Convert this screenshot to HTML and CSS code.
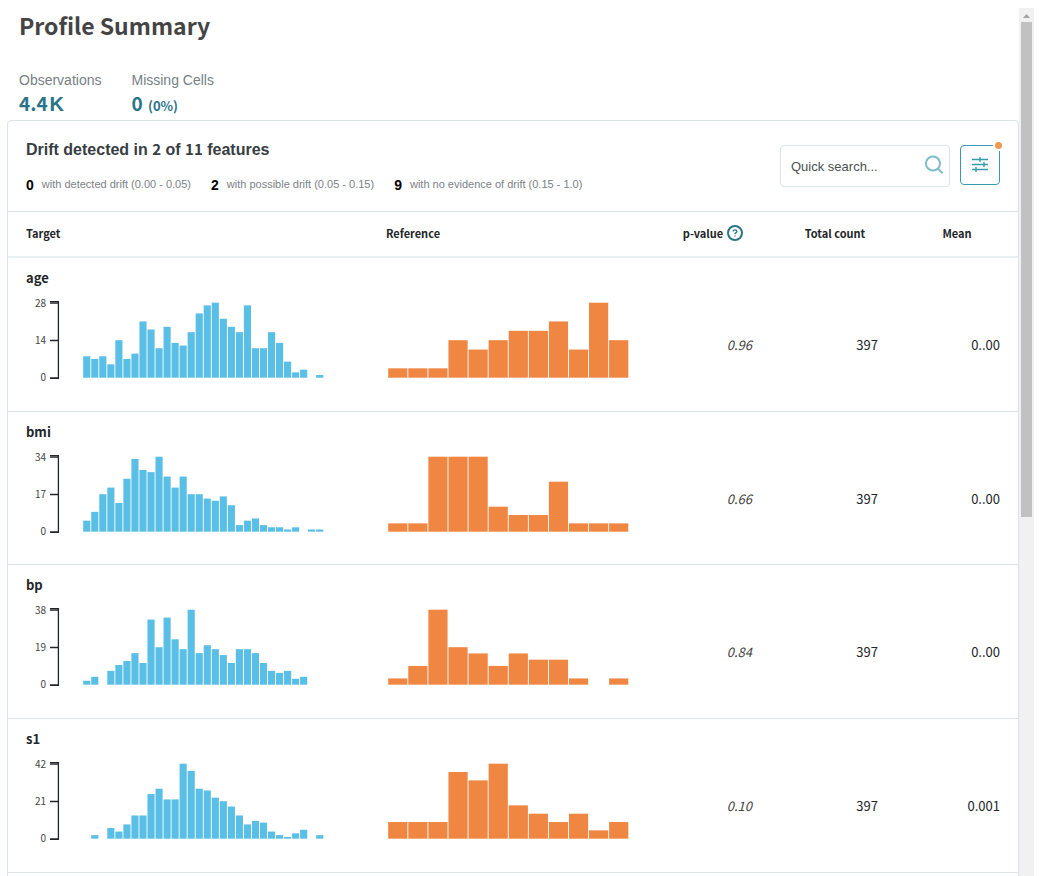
FILE: index.html
```html
<!DOCTYPE html>
<html lang="en">
<head>
<meta charset="utf-8">
<title>Profile Summary</title>
<link rel="stylesheet" href="styles.css">
</head>
<body>
<div class="viewport">
  <main class="content">
    <h1 class="title">Profile Summary</h1>
    <dl class="stats">
      <div class="stat"><dt>Observations</dt><dd>4.4<span class="unit">K</span></dd></div>
      <div class="stat"><dt>Missing Cells</dt><dd>0 <span class="percent">(0%)</span></dd></div>
    </dl>
    <section class="panel">
      <header class="panel-head">
        <div class="drift">
          <h2 class="drift-title">Drift detected in <span class="num">2</span> of <span class="num">11</span> features</h2>
          <ul class="legend">
            <li><strong>0</strong>with detected drift (0.00 - 0.05)</li>
            <li><strong>2</strong>with possible drift (0.05 - 0.15)</li>
            <li><strong>9</strong>with no evidence of drift (0.15 - 1.0)</li>
          </ul>
        </div>
        <div class="tools">
          <label class="search">
            <input type="text" placeholder="Quick search..." aria-label="Quick search">
            <svg class="search-icon" viewBox="0 0 20 20" aria-hidden="true"><circle cx="9" cy="8.5" r="7"/><path d="M13.8 13.4 18.6 18.2"/></svg>
          </label>
          <button class="filter" type="button" aria-label="Filter">
            <svg class="filter-icon" viewBox="0 0 16 16" aria-hidden="true"><path d="M0 3.5H16M0 8.5H16M0 13.5H16M8 1V6M12 6V11M4 11V16"/></svg>
            <span class="dot"></span>
          </button>
        </div>
      </header>
      <table class="features">
        <colgroup><col class="col-target"><col><col class="col-num"><col class="col-num"><col class="col-num"></colgroup>
        <thead>
          <tr>
            <th class="left">Target</th><th class="left">Reference</th>
            <th><span class="help-label">p-value <svg class="help" viewBox="0 0 16 16" aria-hidden="true"><circle cx="8" cy="8" r="7"/><path d="M6.2 6.5C6.2 5.4 7 4.8 8 4.8S9.9 5.4 9.9 6.4C9.9 7.7 8 7.6 8 9.3M8 10.4V11.6"/></svg></span></th>
            <th>Total count</th><th>Mean</th>
          </tr>
        </thead>
        <tbody>
          <tr>
            <td><div class="name">age</div><svg class="chart" role="img" aria-label="age target" data-kind="target" data-values="8,7,8,5,14,7,9,21,18,11,19,13,12,17,24,27,28,22,19,17,27,11,11,17,13,6,2,3,0,1"></svg></td>
            <td class="ref"><svg class="chart" role="img" aria-label="age reference" data-kind="reference" data-values="1,1,1,4,3,4,5,5,6,3,8,4"></svg></td>
            <td class="value p">0.96</td><td class="value">397</td><td class="value">0..00</td>
          </tr>
          <tr>
            <td><div class="name">bmi</div><svg class="chart" role="img" aria-label="bmi target" data-kind="target" data-values="5,9,17,20,13,24,33,28,27,34,25,20,25,17,17,15,14,16,12,3,5,6,3,2,2,1,2,0,1,1"></svg></td>
            <td class="ref"><svg class="chart" role="img" aria-label="bmi reference" data-kind="reference" data-values="1,1,9,9,9,3,2,2,6,1,1,1"></svg></td>
            <td class="value p">0.66</td><td class="value">397</td><td class="value">0..00</td>
          </tr>
          <tr>
            <td><div class="name">bp</div><svg class="chart" role="img" aria-label="bp target" data-kind="target" data-values="2,4,0,7,10,12,16,11,33,19,34,23,18,38,16,20,18,15,11,18,18,16,11,7,6,7,3,4,0,0"></svg></td>
            <td class="ref"><svg class="chart" role="img" aria-label="bp reference" data-kind="reference" data-values="1,3,12,6,5,3,5,4,4,1,0,1"></svg></td>
            <td class="value p">0.84</td><td class="value">397</td><td class="value">0..00</td>
          </tr>
          <tr>
            <td><div class="name">s1</div><svg class="chart" role="img" aria-label="s1 target" data-kind="target" data-values="0,2,0,6,4,8,13,13,25,28,22,22,42,38,28,27,23,21,18,13,8,10,9,4,2,1,3,5,0,2"></svg></td>
            <td class="ref"><svg class="chart" role="img" aria-label="s1 reference" data-kind="reference" data-values="2,2,2,8,7,9,4,3,2,3,1,2"></svg></td>
            <td class="value p">0.10</td><td class="value">397</td><td class="value">0.001</td>
          </tr>
        </tbody>
      </table>
      <div class="more"></div>
    </section>
  </main>
  <div class="scrollbar" aria-hidden="true">
    <svg class="scroll-up" viewBox="0 0 15 14"><path d="M4 10 7.5 6 11 10Z"/></svg>
    <div class="thumb"></div>
  </div>
</div>
<script src="charts.js"></script>
</body>
</html>
```
FILE: styles.css
```css
* { box-sizing: border-box; }
html, body { height: 100%; }
body {
  margin: 0;
  padding: 8px 7px 0;
  background: #fff;
  color: #222529;
  font-family: "Liberation Sans", Arial, sans-serif;
  overflow: hidden;
}
h1, h2, dl, dd, ul { margin: 0; padding: 0; }
.viewport { display: flex; height: 100%; }
.content { flex: 1; min-width: 0; overflow: hidden; }

.title {
  padding: 0 12px;
  font: bold 23px/34px "Noto Sans CJK JP", sans-serif;
  color: #444;
}
.stats { display: flex; gap: 30px; padding: 28px 12px 4px; }
.stat dt { font-size: 14px; line-height: 20px; color: #778085; }
.stat dd {
  font: bold 19px/26px "Noto Sans CJK JP", sans-serif;
  color: #2a7488;
  height: 26px;
}
.unit { margin-left: 2px; font: bold 20px/26px "Liberation Sans", sans-serif; }
.percent { margin-left: 1px; font-size: 13px; }

.panel { border: 1px solid #d9e4e6; border-radius: 4px; }
.panel-head {
  display: flex;
  justify-content: space-between;
  height: 91px;
  padding: 16px 18px 0;
  border-bottom: 1px solid #d9e4e6;
}
.drift-title { font-size: 16px; line-height: 24px; color: #373d42; }
.num { font-family: "Noto Sans CJK JP", sans-serif; font-size: 15px; line-height: 24px; }
.legend {
  display: flex;
  gap: 20px;
  margin-top: 12px;
  list-style: none;
  font-size: 11px;
  line-height: 20px;
  color: #7b8287;
}
.legend li { display: flex; gap: 8px; }
.legend strong { font-size: 14px; line-height: 22px; color: #000; }
.tools { display: flex; gap: 10px; align-items: flex-start; padding-top: 8px; }
.search {
  display: flex;
  align-items: center;
  width: 170px;
  height: 42px;
  padding: 0 5px 2px 10px;
  border: 1px solid #d9e4e6;
  border-radius: 4px;
}
.search input {
  flex: 1;
  min-width: 0;
  padding: 4px 0 0;
  border: 0;
  outline: 0;
  background: none;
  font: 13px/20px "Liberation Sans", sans-serif;
}
.search input::placeholder { color: #4a4f54; opacity: 1; }
.search-icon { width: 20px; height: 20px; fill: none; stroke: #80bcc9; stroke-width: 2; }
.filter {
  position: relative;
  display: grid;
  place-items: center;
  width: 40px;
  height: 40px;
  padding: 0 0 2px;
  border: 1px solid #369bac;
  border-radius: 4px;
  background: #fff;
}
.filter-icon { width: 16px; height: 16px; stroke: #369bac; stroke-width: 1.4; }
.dot {
  position: absolute;
  top: -6px;
  right: -5px;
  width: 11px;
  height: 11px;
  border: 2px solid #fff;
  border-radius: 50%;
  background: #eb9a4f;
}

.features { width: 100%; table-layout: fixed; border-collapse: separate; border-spacing: 0; }
.col-target { width: 360px; }
.col-num { width: 122px; }
.features th {
  height: 46px;
  padding: 0 0 2px;
  border-bottom: 2px solid #e9f0f2;
  font: bold 11px/20px "Noto Sans CJK JP", sans-serif;
}
.features th.left { padding-left: 18px; text-align: left; }
.help-label { display: inline-flex; gap: 4px; align-items: center; }
.help { width: 16px; height: 16px; fill: none; stroke: #2a7488; stroke-width: 2; }
.help path { stroke-width: 1.3; }
.features td {
  height: 154px;
  padding: 10px 0 0 18px;
  vertical-align: top;
  border-bottom: 1px solid #d9e4e6;
}
.features tbody tr:nth-child(3n + 2) td { height: 153px; }
.name { height: 20px; margin-bottom: 9px; font: bold 13px/20px "Noto Sans CJK JP", sans-serif; }
.features td.ref { padding-top: 39px; }
.features td.value {
  padding: 77px 18px 0 0;
  text-align: right;
  font: 13px/20px "Noto Sans CJK JP", sans-serif;
}
.features td.value.p { padding-right: 22px; font-style: italic; color: #444; }
.chart { display: block; width: 310px; height: 84px; overflow: visible; }
.ref .chart { width: 250px; }
.bar-target { fill: #5abfe6; }
.bar-reference { fill: #ef8641; }
.axis { fill: none; stroke: #222529; stroke-width: 1.3; }
.tick { font: 10px "Noto Sans CJK JP", sans-serif; fill: #444; text-anchor: end; }
.more { height: 154px; }

.scrollbar { width: 15px; height: 100%; background: #f1f1f1; }
.scroll-up { display: block; width: 15px; height: 14px; fill: #a3a3a3; }
.thumb { height: 57%; margin: 0 2px; background: #c1c1c1; }
```
FILE: charts.js
```js
const NS = "http://www.w3.org/2000/svg";
const BASE = 80.7;
const HEIGHT = 75;
const WIDTH = 241;

function add(parent, tag, attrs, text) {
  const node = document.createElementNS(NS, tag);
  for (const key in attrs) node.setAttribute(key, attrs[key]);
  if (text !== undefined) node.textContent = text;
  parent.appendChild(node);
}

document.querySelectorAll(".chart").forEach((svg) => {
  const kind = svg.dataset.kind;
  const values = svg.dataset.values.split(",").map(Number);
  const max = Math.max(...values);
  const step = WIDTH / values.length;
  const left = kind === "target" ? 57 : 2;

  values.forEach((value, i) => {
    if (!value) return;
    const h = (value / max) * HEIGHT;
    add(svg, "rect", {
      class: "bar-" + kind, x: left + i * step + 0.2, y: BASE - h,
      width: step - 0.9, height: h
    });
  });

  if (kind === "target") {
    add(svg, "path", { class: "axis", d: "M24 4.6H32.4V81.3H24M24 6.2H32.4M24 43.5H32.4M24 80.8H32.4" });
    [[max, 6], [max / 2, 43], [0, 80]].forEach(([label, y]) => {
      add(svg, "text", { class: "tick", x: 20, y: y + 4 }, label);
    });
  }
});
```
